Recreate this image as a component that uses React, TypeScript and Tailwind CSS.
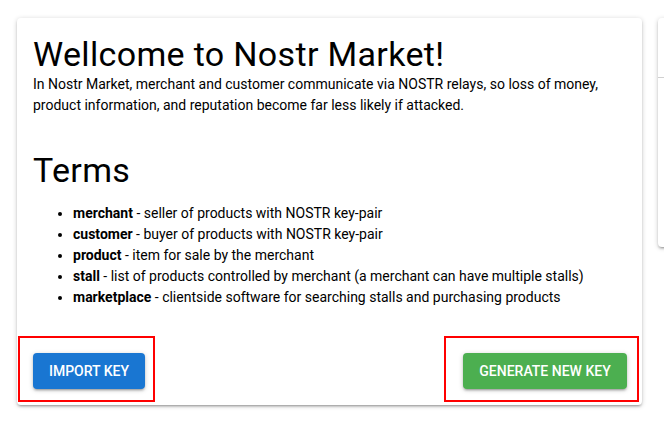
import React from "react";

const shadow =
  "shadow-[0_1px_5px_rgba(0,0,0,0.2),0_2px_2px_rgba(0,0,0,0.14),0_3px_1px_-2px_rgba(0,0,0,0.12)]";

export default function App() {
  const terms: [string, string][] = [
    ["merchant", "seller of products with NOSTR key-pair"],
    ["customer", "buyer of products with NOSTR key-pair"],
    ["product", "item for sale by the merchant"],
    ["stall", "list of products controlled by merchant (a merchant can have multiple stalls)"],
    ["marketplace", "clientside software for searching stalls and purchasing products"],
  ];
  return (
    <div
      className="w-[664px] h-[424px] overflow-hidden bg-white flex items-start gap-4 pl-[17px] pt-[18px] text-black"
      style={{ fontFamily: "Roboto, 'Liberation Sans', sans-serif" }}
    >
      <div className={`w-[625px] shrink-0 bg-white rounded ${shadow} flex flex-col pb-[3px]`}>
        <div className="px-4 pt-4">
          <h4 className="text-[34px] leading-[40px] font-normal tracking-[0.33px]">Wellcome to Nostr Market!</h4>
          <p className="text-sm leading-[21px]">
            In Nostr Market, merchant and customer communicate via NOSTR relays, so loss of money,
            product information, and reputation become far less likely if attacked.
          </p>
          <h4 className="mt-[34px] text-[34px] leading-[40px] font-normal tracking-[0.33px]">Terms</h4>
          <ul className="mt-[13px] pl-10 list-disc text-sm leading-[21px]">
            {terms.map(([k, v]) => (
              <li key={k}>
                <span className="font-bold">{k}</span> - {v}
              </li>
            ))}
          </ul>
        </div>
        <div className="mt-[28px] flex justify-between pl-[1px] pr-[3px]">
          <div className="w-[137px] h-[66px] border-2 border-[#ff0000] pl-[13px] pt-[15px]">
            <button
              className={`h-9 w-[112px] rounded bg-[#1976d2] text-white text-sm font-medium uppercase ${shadow}`}
            >
              Import Key
            </button>
          </div>
          <div className="w-[195px] h-[66px] border-2 border-[#ff0000] pl-[17px] pt-[15px]">
            <button
              className={`h-9 w-[164px] rounded bg-[#4caf50] text-white text-sm font-medium uppercase ${shadow}`}
            >
              Generate New Key
            </button>
          </div>
        </div>
      </div>
      <div className={`w-[300px] h-[229px] shrink-0 bg-white rounded ${shadow} flex flex-col`}>
        <div className="h-[60px] border-b border-[#d0d0d0]" />
        <div className="flex-1" />
      </div>
    </div>
  );
}
